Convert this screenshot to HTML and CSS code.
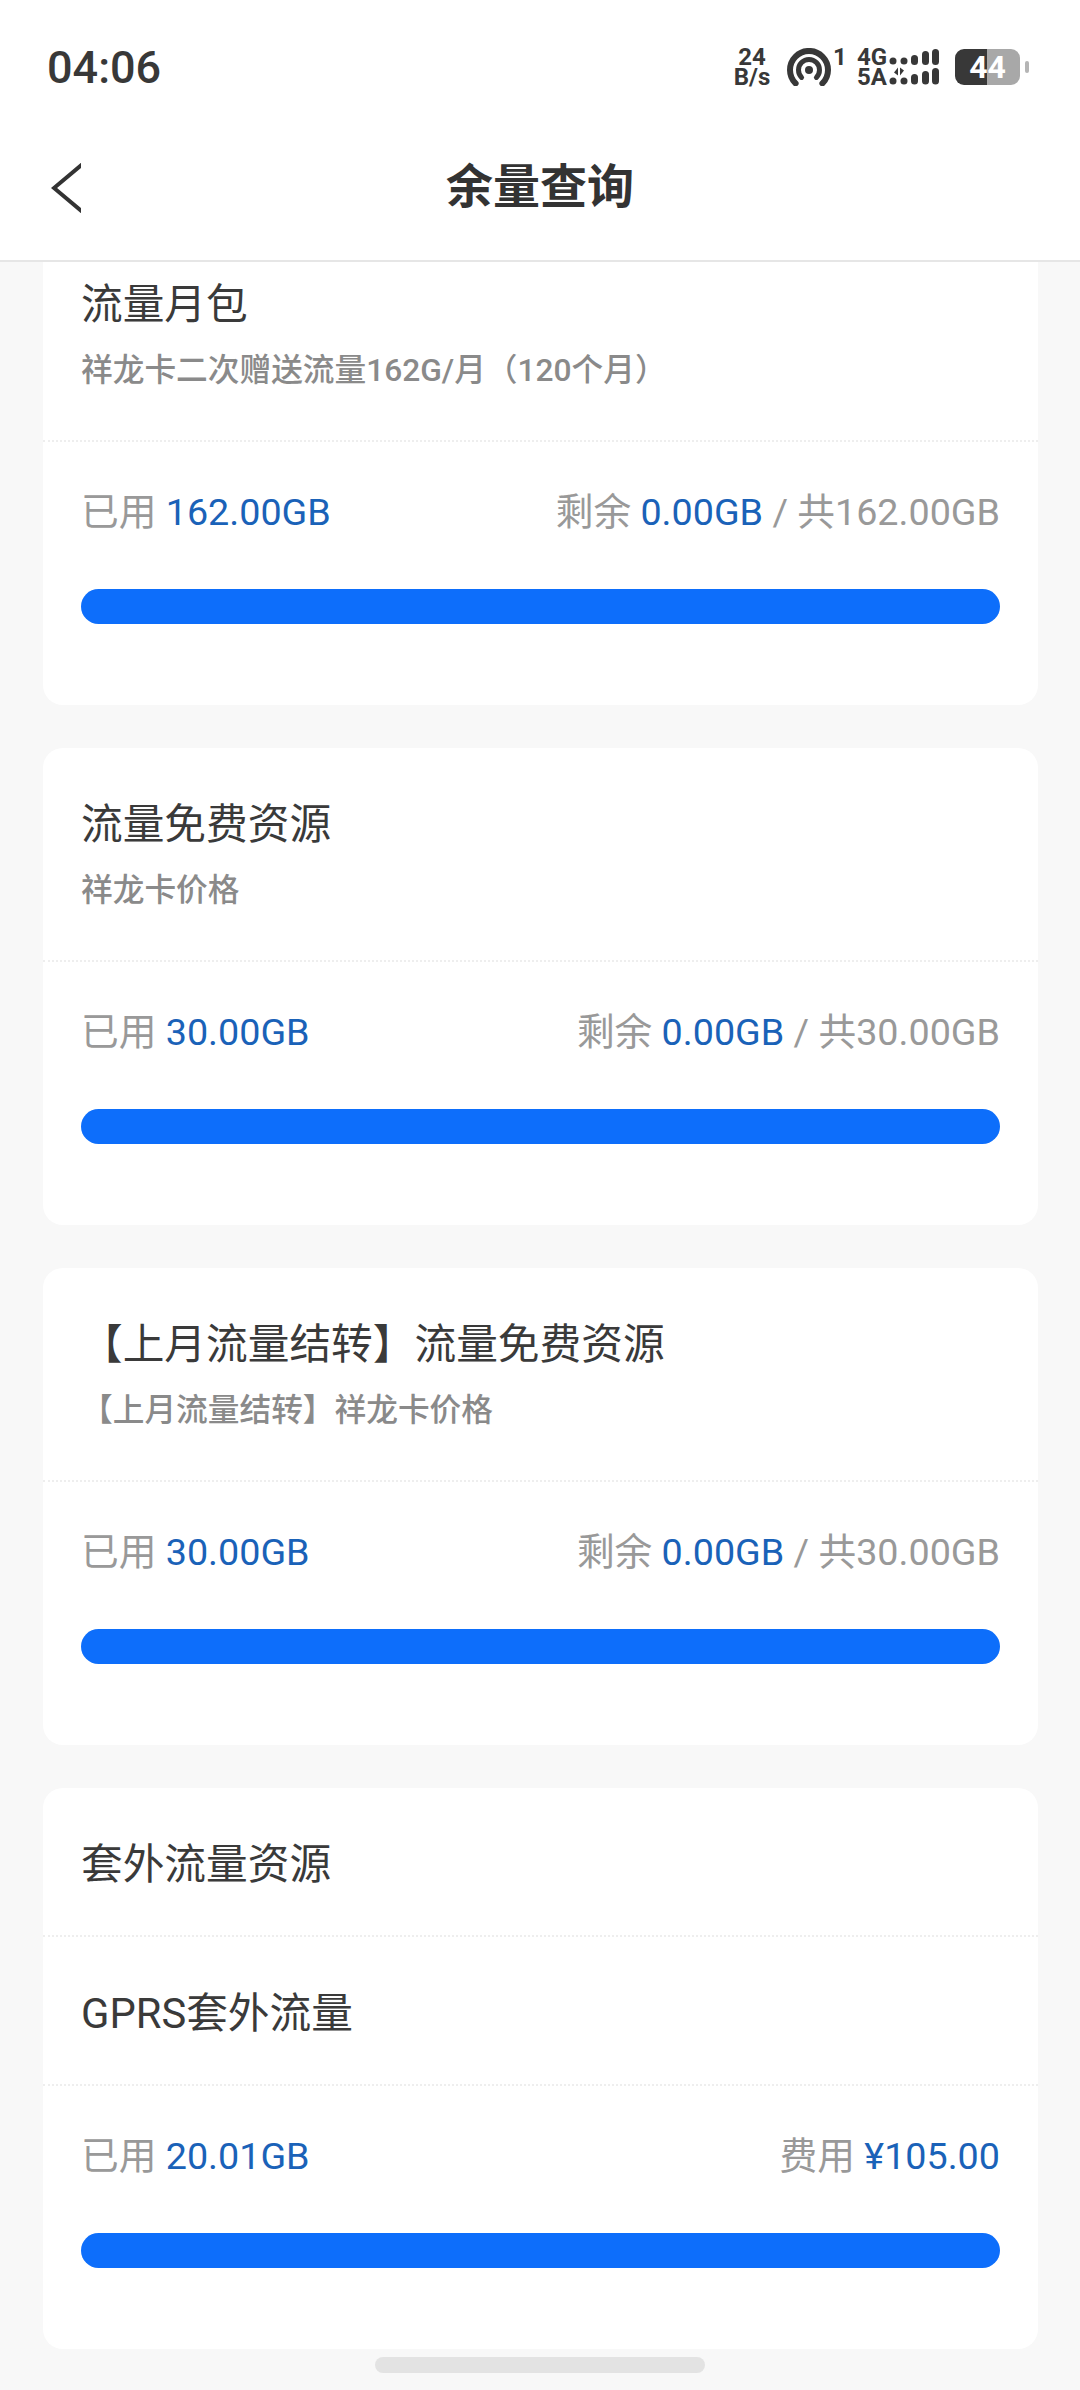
FILE: index.html
```html
<!DOCTYPE html>
<html lang="zh-CN">
<head>
<meta charset="utf-8">
<title>余量查询</title>
<link rel="stylesheet" href="styles.css">
</head>
<body>
<div class="screen">
  <header class="top">
    <div class="status">
      <span class="time">04:06</span>
      <div class="status-right">
        <div class="speed"><span>24</span><span>B/s</span></div>
        <svg class="hotspot" width="44" height="38" viewBox="0 0 44 38">
          <path d="M8.6 35.4A19 19 0 1 1 35.4 35.4" fill="none" stroke="#383838" stroke-width="6" stroke-linecap="round"/>
          <path d="M14.6 29.4A10.5 10.5 0 1 1 29.4 29.4" fill="none" stroke="#383838" stroke-width="5" stroke-linecap="round"/>
          <circle cx="22" cy="22" r="4" fill="#383838"/>
        </svg>
        <span class="sim">1</span>
        <div class="net"><span>4G</span><span>5A</span></div>
        <svg class="bars" width="50" height="36" viewBox="0 0 50 36">
          <g fill="#383838">
            <circle cx="4" cy="12" r="3.5"/><circle cx="15" cy="12" r="3.5"/>
            <rect x="22" y="6" width="7" height="10" rx="3.5"/><rect x="33" y="2" width="7" height="14" rx="3.5"/><rect x="43" y="0" width="7" height="16" rx="3.5"/>
            <circle cx="4" cy="32" r="3.5"/><circle cx="15" cy="32" r="3.5"/>
            <rect x="22" y="25" width="7" height="10.5" rx="3.5"/><rect x="33" y="22" width="7" height="13.5" rx="3.5"/><rect x="43" y="19" width="7" height="16.5" rx="3.5"/>
            <path d="M9 18.500v8l-4-3zM11 26.500v-8l4 3z"/>
          </g>
        </svg>
        <div class="battery">
          <div class="battery-body"><span class="battery-num">44</span></div>
          <span class="battery-tip"></span>
        </div>
      </div>
    </div>
    <div class="nav">
      <svg class="back" width="30" height="50" viewBox="0 0 30 50"><path d="M34 -1L3 25L34 51" fill="none" stroke="#333" stroke-width="4"/></svg>
      <h1 class="nav-title">余量查询</h1>
    </div>
  </header>

  <main class="list">
    <section class="card">
      <div class="head">
        <div class="title">流量月包</div>
        <div class="sub">祥龙卡二次赠送流量162G/月（120个月）</div>
      </div>
      <div class="usage">
        <div class="stats">
          <span>已用 <b>162.00GB</b></span>
          <span>剩余 <b>0.00GB</b> / 共162.00GB</span>
        </div>
        <div class="bar"><div class="fill"></div></div>
      </div>
    </section>

    <section class="card">
      <div class="head">
        <div class="title">流量免费资源</div>
        <div class="sub">祥龙卡价格</div>
      </div>
      <div class="usage">
        <div class="stats">
          <span>已用 <b>30.00GB</b></span>
          <span>剩余 <b>0.00GB</b> / 共30.00GB</span>
        </div>
        <div class="bar"><div class="fill"></div></div>
      </div>
    </section>

    <section class="card">
      <div class="head">
        <div class="title">【上月流量结转】流量免费资源</div>
        <div class="sub">【上月流量结转】祥龙卡价格</div>
      </div>
      <div class="usage">
        <div class="stats">
          <span>已用 <b>30.00GB</b></span>
          <span>剩余 <b>0.00GB</b> / 共30.00GB</span>
        </div>
        <div class="bar"><div class="fill"></div></div>
      </div>
    </section>

    <section class="card">
      <div class="row title">套外流量资源</div>
      <div class="row title">GPRS套外流量</div>
      <div class="usage">
        <div class="stats">
          <span>已用 <b>20.01GB</b></span>
          <span>费用 <b>¥105.00</b></span>
        </div>
        <div class="bar"><div class="fill"></div></div>
      </div>
    </section>
  </main>
  <div class="home"></div>
</div>
</body>
</html>
```

FILE: styles.css
```css
* { box-sizing: border-box; }
html, body { margin: 0; padding: 0; }
body {
  width: 1080px;
  height: 2390px;
  overflow: hidden;
  background: #f8f8f8;
  font-family: Roboto, "Noto Sans CJK SC", sans-serif;
  color: #333;
}
.screen { position: relative; width: 1080px; height: 2390px; overflow: hidden; }

.top {
  position: relative;
  z-index: 2;
  height: 262px;
  background: #fff;
  border-bottom: 2px solid #e6e6e6;
}
.status {
  height: 134px;
  padding: 0 51px 0 47px;
  display: flex;
  align-items: center;
  justify-content: space-between;
}
.time { font-size: 45px; font-weight: 500; color: #383838; line-height: 1; }
.status-right { display: flex; align-items: center; color: #383838; }
.speed, .net {
  display: flex;
  flex-direction: column;
  align-items: center;
  font-weight: 700;
  font-size: 24px;
  line-height: 20px;
}
.speed { width: 36px; }
.hotspot { margin-left: 17px; }
.sim { width: 8px; margin-left: 2px; align-self: flex-start; font-size: 24px; font-weight: 700; line-height: 20px; }
.net { width: 28px; margin-left: 17px; }
.bars { margin-left: 3px; }
.battery { display: flex; align-items: center; margin-left: 16px; }
.battery-body {
  width: 65px;
  height: 36px;
  border-radius: 9px;
  background: linear-gradient(90deg, #383838 0 49%, #a8a8a8 49% 100%);
  display: flex;
  align-items: center;
  justify-content: center;
}
.battery-num { color: #fff; font-size: 32px; font-weight: 700; line-height: 1; }
.battery-tip { width: 4px; height: 12px; margin-left: 5px; border-radius: 2px; background: #b5b5b5; }

.nav {
  height: 126px;
  padding: 0 51px 22px;
  display: grid;
  grid-template-columns: 1fr auto 1fr;
  align-items: center;
}
.back { margin-top: 4px; }
.nav-title { margin: 0; font-size: 47px; font-weight: 700; line-height: 1; color: #333; }

.list {
  display: flex;
  flex-direction: column;
  gap: 43px;
  padding: 0 42px 0 43px;
  margin-top: -34px;
}
.card { background: #fff; border-radius: 20px; overflow: hidden; padding-bottom: 81px; }
.head { height: 214px; padding: 49px 38px 0; border-bottom: 2px dotted #eee; }
.title { font-size: 41.7px; line-height: 56px; color: #3a3a3a; }
.sub { margin-top: 17px; font-size: 31.7px; line-height: 42px; font-weight: 500; color: #8a8a8a; }
.usage { padding: 45px 38px 0; }
.stats {
  display: flex;
  justify-content: space-between;
  font-size: 37.7px;
  line-height: 50px;
  color: #999;
}
.stats b { font-weight: 400; color: #1a62b8; }
.bar { margin-top: 52px; height: 35px; border-radius: 18px; background: #e8f0fe; overflow: hidden; }
.fill { width: 100%; height: 100%; background: #0d6efb; }

.row { height: 149px; padding: 49px 38px 0; border-bottom: 2px dotted #eee; }
.home {
  position: absolute;
  left: 375px;
  top: 2357px;
  width: 330px;
  height: 16px;
  border-radius: 8px;
  background: #e3e3e3;
}
```
